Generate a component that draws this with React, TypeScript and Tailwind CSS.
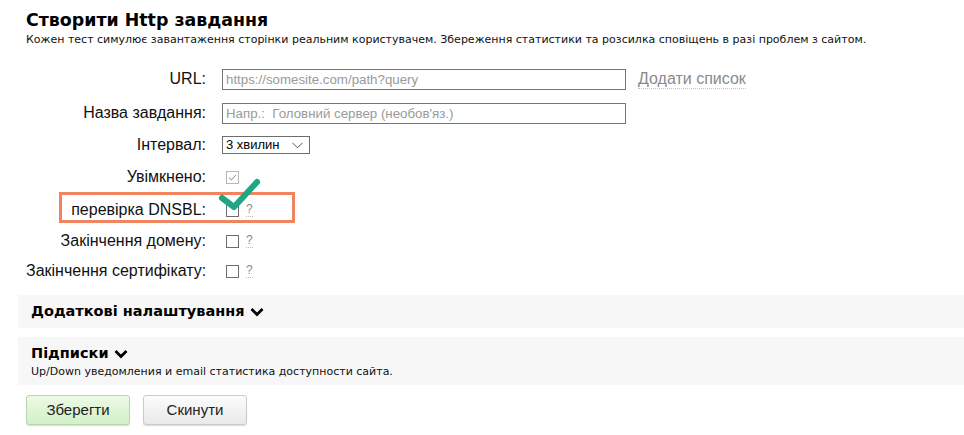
import React from "react";

const tahoma = { fontFamily: '"DejaVu Sans", Verdana, sans-serif' };

function Help() {
  return (
    <span className="ml-[7px] text-[12px] text-[#8a8a8a] border-b border-dotted border-[#bbbbbb] leading-[13px] font-['Liberation_Sans',Arial,sans-serif]">
      ?
    </span>
  );
}

function Box({ checked = false }: { checked?: boolean }) {
  return (
    <span
      className={
        "inline-flex items-center justify-center w-[13px] h-[13px] bg-white border " +
        (checked ? "border-[#b8b8b8]" : "border-[#6e6e6e]")
      }
    >
      {checked && (
        <svg width="9" height="9" viewBox="0 0 9 9">
          <path d="M1 4.8 L3.4 7 L8 1.8" fill="none" stroke="#7f8aa0" strokeWidth="1" />
        </svg>
      )}
    </span>
  );
}

function Row({
  label,
  h,
  children,
}: {
  label: string;
  h: string;
  children: React.ReactNode;
}) {
  return (
    <div className={"flex items-center " + h}>
      <div className="w-[180px] text-right text-[16px] text-[#111] whitespace-nowrap">{label}</div>
      <div className="ml-[16px] flex items-center">{children}</div>
    </div>
  );
}

export default function App() {
  return (
    <div className="w-[964px] h-[435px] bg-white relative overflow-hidden font-['Liberation_Sans',Arial,sans-serif]">
      <div className="pl-[26px] pt-[9px]" style={tahoma}>
        <h1 className="text-[17.4px] font-bold text-black leading-[22px]">Створити Http завдання</h1>
        <p className="text-[11px] text-[#111] leading-[15px] mt-[1px]">
          Кожен тест симулює завантаження сторінки реальним користувачем. Збереження статистики та розсилка сповіщень в разі проблем з сайтом.
        </p>
      </div>

      <div className="pl-[26px] mt-[15px]">
        <Row label="URL:" h="h-[34px]">
          <input
            className="w-[404px] h-[21px] border border-[#767676] px-[3px] text-[13.3px] placeholder:text-[#9a9a9a] outline-none"
            placeholder="https://somesite.com/path?query"
          />
          <span className="ml-[12px] text-[16px] text-[#8a8a8a] border-b border-dotted border-[#c4c4c4] leading-[18px]">
            Додати список
          </span>
        </Row>
        <Row label="Назва завдання:" h="h-[34px]">
          <input
            className="w-[404px] h-[21px] border border-[#767676] px-[3px] text-[13.3px] placeholder:text-[#9a9a9a] outline-none"
            placeholder="Напр.:  Головний сервер (необов'яз.)"
          />
        </Row>
        <Row label="Інтервал:" h="h-[30px]">
          <div className="w-[88px] h-[18px] border border-[#6e6e6e] flex items-center justify-between pl-[3px] pr-[6px] text-[13px] text-black">
            <span>3 хвилин</span>
            <svg width="11" height="7" viewBox="0 0 11 7">
              <path d="M0.5 0.8 L5.5 5.8 L10.5 0.8" fill="none" stroke="#555" strokeWidth="1" />
            </svg>
          </div>
        </Row>
        <Row label="Увімкнено:" h="h-[34px]">
          <span className="ml-[4px] flex"><Box checked /></span>
        </Row>
        <Row label="перевірка DNSBL:" h="h-[32px]">
          <span className="ml-[4px] flex items-center"><Box /><Help /></span>
        </Row>
        <Row label="Закінчення домену:" h="h-[30px]">
          <span className="ml-[4px] flex items-center"><Box /><Help /></span>
        </Row>
        <Row label="Закінчення сертифікату:" h="h-[30px]">
          <span className="ml-[4px] flex items-center"><Box /><Help /></span>
        </Row>
      </div>

      <div className="ml-[18px] mt-[9px] flex flex-col gap-[9px]" style={tahoma}>
        <div className="h-[33px] bg-[#f7f7f7] pl-[13px] flex items-center">
          <span className="text-[14.5px] font-bold text-black">Додаткові налаштування</span>
          <svg className="ml-[5px]" width="14" height="10" viewBox="0 0 14 10">
            <path d="M1.5 2 L7 7.5 L12.5 2" fill="none" stroke="#000" strokeWidth="2.8" />
          </svg>
        </div>
        <div className="h-[48px] bg-[#f7f7f7] pl-[13px] pt-[7px]">
          <div className="flex items-center h-[20px]">
            <span className="text-[14.5px] font-bold text-black">Підписки</span>
            <svg className="ml-[5px]" width="14" height="10" viewBox="0 0 14 10">
              <path d="M1.5 2 L7 7.5 L12.5 2" fill="none" stroke="#000" strokeWidth="2.8" />
            </svg>
          </div>
          <p className="text-[11px] text-[#111] leading-[15px]">Up/Down уведомления и email статистика доступности сайта.</p>
        </div>
      </div>

      <div className="ml-[26px] mt-[10px] flex gap-[13px]">
        <button className="w-[104px] h-[30px] rounded-[3px] border border-[#b9d7ab] bg-gradient-to-b from-[#ecfae6] to-[#d3f0c7] text-[15px] text-[#222] shadow-[0_1px_1px_rgba(0,0,0,0.15)]">
          Зберегти
        </button>
        <button className="w-[104px] h-[30px] rounded-[3px] border border-[#cccccc] bg-gradient-to-b from-[#fcfcfc] to-[#e9e9e9] text-[15px] text-[#222] shadow-[0_1px_1px_rgba(0,0,0,0.15)]">
          Скинути
        </button>
      </div>

      <div className="absolute left-[59px] top-[192px] w-[236px] h-[31px] border-[3px] border-[#f0845e] pointer-events-none" />
      <svg className="absolute left-[215px] top-[176px] pointer-events-none" width="50" height="40" viewBox="0 0 50 40">
        <path d="M7 22 L19 31 L42 6" fill="none" stroke="#1fa785" strokeWidth="6" strokeLinecap="round" strokeLinejoin="round" />
      </svg>
    </div>
  );
}
